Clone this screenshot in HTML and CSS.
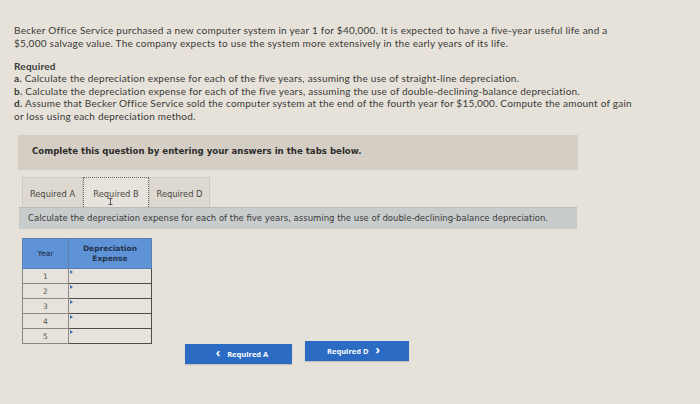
FILE: index.html
```html
<!DOCTYPE html>
<html>
<head>
<meta charset="utf-8">
<link rel="stylesheet" href="styles.css">
</head>
<body>
<div class="page">
  <p class="intro">Becker Office Service purchased a new computer system in year 1 for $40,000. It is expected to have a five-year useful life and a $5,000 salvage value. The company expects to use the system more extensively in the early years of its life.</p>
  <div class="req">
    <div class="req-title">Required</div>
    <div class="req-line"><b>a.</b> Calculate the depreciation expense for each of the five years, assuming the use of straight-line depreciation.</div>
    <div class="req-line"><b>b.</b> Calculate the depreciation expense for each of the five years, assuming the use of double-declining-balance depreciation.</div>
    <div class="req-line"><b>d.</b> Assume that Becker Office Service sold the computer system at the end of the fourth year for $15,000. Compute the amount of gain or loss using each depreciation method.</div>
  </div>
  <div class="panel">Complete this question by entering your answers in the tabs below.</div>
  <div class="tabs">
    <div class="tab">Required A</div>
    <div class="tab active">Required B<svg class="ibeam" width="5" height="7" viewBox="0 0 5 7"><path d="M0.5 0.5h4M2.5 0.5v6M0.5 6.5h4" stroke="#3a3a3a" stroke-width="0.8" fill="none"/></svg></div>
    <div class="tab">Required D</div>
  </div>
  <div class="instr">Calculate the depreciation expense for each of the five years, assuming the use of double-declining-balance depreciation.</div>
  <table class="grid">
    <thead>
      <tr><th class="c-year">Year</th><th class="c-exp">Depreciation<br>Expense</th></tr>
    </thead>
    <tbody>
      <tr><td class="c-year">1</td><td class="c-exp"><span class="flag"></span></td></tr>
      <tr><td class="c-year">2</td><td class="c-exp"><span class="flag"></span></td></tr>
      <tr><td class="c-year">3</td><td class="c-exp"><span class="flag"></span></td></tr>
      <tr><td class="c-year">4</td><td class="c-exp"><span class="flag"></span></td></tr>
      <tr><td class="c-year">5</td><td class="c-exp"><span class="flag"></span></td></tr>
    </tbody>
  </table>
  <div class="nav">
    <div class="btn prev"><span class="chev">&lsaquo;</span> Required A</div>
    <div class="btn next">Required D <span class="chev">&rsaquo;</span></div>
  </div>
</div>
</body>
</html>
```
FILE: styles.css
```css
html, body {
  margin: 0;
  padding: 0;
}
body {
  width: 700px;
  height: 404px;
  overflow: hidden;
  background: #e6e2da;
  font-family: "Lato", "Open Sans", sans-serif;
  color: #3a3937;
}
.page {
  padding: 24px 0 0 14px;
}
.intro {
  margin: 0;
  width: 602px;
  font-size: 10px;
  letter-spacing: 0.25px;
  line-height: 12.5px;
}
.req {
  margin-top: 11px;
  width: 622px;
  font-size: 10px;
  letter-spacing: 0.22px;
  line-height: 12.4px;
}
.req-title {
  font-weight: bold;
}
.req b {
  font-weight: bold;
}
.panel {
  margin: 13px 0 0 4px;
  width: 560px;
  height: 35px;
  box-sizing: border-box;
  padding: 11px 0 0 14px;
  background: #d4cec5;
  font-family: "DejaVu Sans", Verdana, sans-serif;
  font-weight: bold;
  font-size: 8.6px;
  color: #2d2c2a;
}
.tabs {
  display: flex;
  margin: 7px 0 0 8px;
  height: 30px;
}
.tab {
  width: 61px;
  box-sizing: border-box;
  border: 1px solid #cfc9c0;
  border-bottom: none;
  background: #ddd8d0;
  font-family: "DejaVu Sans", Verdana, sans-serif;
  font-size: 8.3px;
  color: #4a4946;
  display: flex;
  align-items: center;
  justify-content: center;
  padding-top: 3px;
}
.tab.active {
  position: relative;
  width: 66px;
  background: #e7e3dc;
  border: 1px dotted #666;
  border-bottom: none;
}
.ibeam {
  position: absolute;
  left: 24px;
  top: 20px;
}
.instr {
  margin: 0 0 0 5px;
  width: 558px;
  height: 22px;
  box-sizing: border-box;
  padding: 5px 0 0 9px;
  background: #c8cccd;
  border-top: 1px solid #b9bcbc;
  font-family: "DejaVu Sans", Verdana, sans-serif;
  font-size: 8.5px;
  color: #3a3a38;
}
.grid {
  margin: 9px 0 0 8px;
  border-collapse: collapse;
  font-family: "DejaVu Sans", Verdana, sans-serif;
  font-size: 7.5px;
}
.grid th {
  background: #5f93d8;
  color: #1f2a3a;
  font-weight: normal;
  height: 29px;
  padding: 0;
  border: 1px solid #5a7fb0;
  line-height: 10px;
}
.grid th.c-exp {
  font-weight: bold;
  color: #22324a;
}
.grid .c-year {
  width: 45px;
}
.grid .c-exp {
  width: 82px;
}
.grid td {
  height: 14px;
  padding: 0;
  border: 1px solid #8d8a85;
  text-align: center;
  color: #5a5955;
  background: #e7e3dc;
}
.grid td.c-exp {
  position: relative;
  border: 1px solid #4d4c49;
  border-width: 1px 1.5px 1.5px 1px;
}
.flag {
  position: absolute;
  left: 1px;
  top: 1px;
  width: 0;
  height: 0;
  border-top: 2px solid transparent;
  border-bottom: 2px solid transparent;
  border-left: 3px solid #3b6fb8;
}
.nav {
  display: flex;
  gap: 13px;
  margin: -3px 0 0 171px;
  align-items: flex-start;
}
.btn {
  background: #2c6bc4;
  color: #fff;
  font-family: "Open Sans", "Lato", sans-serif;
  font-weight: bold;
  font-size: 7.5px;
  height: 20px;
  display: flex;
  align-items: center;
  justify-content: center;
  box-sizing: border-box;
  box-shadow: 0 1px 1px rgba(0, 0, 0, 0.15);
}
.btn.prev {
  width: 107px;
  margin-top: 3px;
}
.btn.next {
  width: 104px;
}
.chev {
  font-size: 12px;
  margin: 0 7px;
  line-height: 1;
  position: relative;
  top: -1px;
}
```
